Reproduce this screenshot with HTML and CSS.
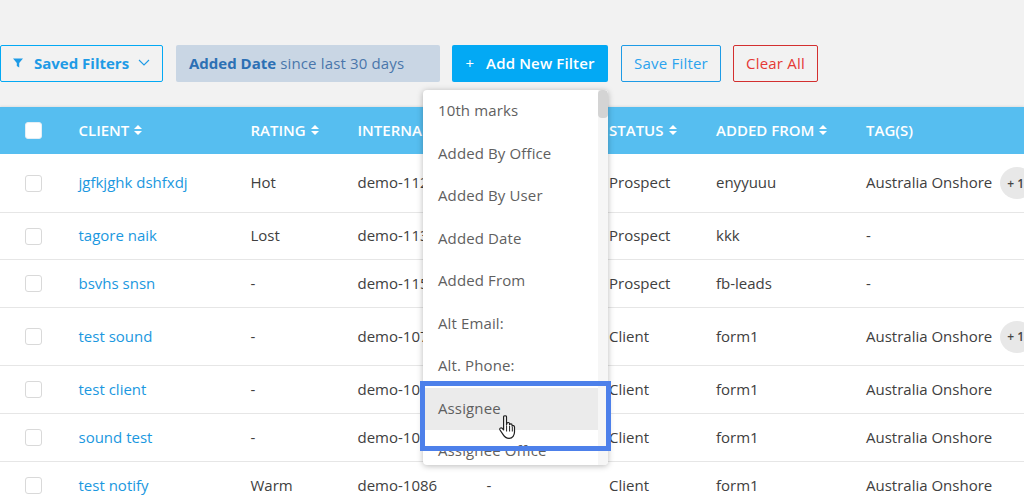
FILE: index.html
```html
<!DOCTYPE html>
<html lang="en">
<head>
<meta charset="utf-8">
<title>Clients</title>
<link rel="stylesheet" href="styles.css">
</head>
<body>
<div class="page">
  <div class="toolbar">
    <button class="btn saved">
      <svg class="ic-filter" viewBox="0 0 10 10" width="10" height="10"><path d="M0 0.5h10L6.2 5v4.5L3.8 8V5z" fill="currentColor"/></svg>
      <span>Saved Filters</span>
      <svg class="ic-chev" viewBox="0 0 12 7" width="12" height="7"><path d="M1 1l5 5 5-5" fill="none" stroke="currentColor" stroke-width="1.1"/></svg>
    </button>
    <div class="chip"><b>Added Date</b> since last 30 days</div>
    <button class="btn add"><span class="plus">+</span><span>Add New Filter</span></button>
    <button class="btn save">Save Filter</button>
    <button class="btn clear">Clear All</button>
  </div>

  <div class="table">
    <div class="row head">
      <div class="cell"><span class="check head-check"></span></div>
      <div class="cell">CLIENT<span class="sort"></span></div>
      <div class="cell">RATING<span class="sort"></span></div>
      <div class="cell">INTERNAL</div>
      <div class="cell"></div>
      <div class="cell">STATUS<span class="sort"></span></div>
      <div class="cell">ADDED FROM<span class="sort"></span></div>
      <div class="cell">TAG(S)</div>
    </div>
    <div class="row tall">
      <div class="cell"><span class="check"></span></div>
      <div class="cell link">jgfkjghk dshfxdj</div><div class="cell">Hot</div><div class="cell">demo-1125</div><div class="cell"></div><div class="cell">Prospect</div><div class="cell">enyyuuu</div>
      <div class="cell">Australia Onshore<span class="more">+ 1</span></div>
    </div>
    <div class="row">
      <div class="cell"><span class="check"></span></div>
      <div class="cell link">tagore naik</div><div class="cell">Lost</div><div class="cell">demo-1130</div><div class="cell"></div><div class="cell">Prospect</div><div class="cell">kkk</div><div class="cell">-</div>
    </div>
    <div class="row">
      <div class="cell"><span class="check"></span></div>
      <div class="cell link">bsvhs snsn</div><div class="cell">-</div><div class="cell">demo-1150</div><div class="cell"></div><div class="cell">Prospect</div><div class="cell">fb-leads</div><div class="cell">-</div>
    </div>
    <div class="row tall">
      <div class="cell"><span class="check"></span></div>
      <div class="cell link">test sound</div><div class="cell">-</div><div class="cell">demo-1075</div><div class="cell"></div><div class="cell">Client</div><div class="cell">form1</div>
      <div class="cell">Australia Onshore<span class="more">+ 1</span></div>
    </div>
    <div class="row">
      <div class="cell"><span class="check"></span></div>
      <div class="cell link">test client</div><div class="cell">-</div><div class="cell">demo-1088</div><div class="cell"></div><div class="cell">Client</div><div class="cell">form1</div><div class="cell">Australia Onshore</div>
    </div>
    <div class="row">
      <div class="cell"><span class="check"></span></div>
      <div class="cell link">sound test</div><div class="cell">-</div><div class="cell">demo-1087</div><div class="cell"></div><div class="cell">Client</div><div class="cell">form1</div><div class="cell">Australia Onshore</div>
    </div>
    <div class="row">
      <div class="cell"><span class="check"></span></div>
      <div class="cell link">test notify</div><div class="cell">Warm</div><div class="cell">demo-1086</div><div class="cell">-</div><div class="cell">Client</div><div class="cell">form1</div><div class="cell">Australia Onshore</div>
    </div>
  </div>

  <div class="menu">
    <div class="menu-list">
      <div class="item">10th marks</div>
      <div class="item">Added By Office</div>
      <div class="item">Added By User</div>
      <div class="item">Added Date</div>
      <div class="item">Added From</div>
      <div class="item">Alt Email:</div>
      <div class="item">Alt. Phone:</div>
      <div class="item hover">Assignee</div>
      <div class="item">Assignee Office</div>
    </div>
    <div class="scrollbar"><div class="thumb"></div></div>
  </div>
  <div class="focus-box"></div>
  <svg class="cursor" viewBox="0 0 18 24" width="18" height="24">
    <path d="M4.6 2c0-1.7 2.9-1.7 2.9 0v8.2l.4-1.8c.4-1.4 2.6-1.1 2.6.4v1c.4-1.3 2.6-1.1 2.6.4v1c.5-1.1 2.4-.8 2.4.7v5.2c0 3-1.8 6.2-5.4 6.2-3 0-4.5-1.1-5.8-3.4L1 15c-.9-1.5.9-2.9 2.2-1.7l1.4 1.6z" fill="#fff" stroke="#1f1f1f" stroke-width="1.2" stroke-linejoin="round"/>
    <path d="M7.6 11v5.5M10.6 11v5.5M13.3 12v4.5" stroke="#1f1f1f" stroke-width="1" fill="none"/>
  </svg>
</div>
</body>
</html>
```
FILE: styles.css
```css
* { box-sizing: border-box; }
html, body { margin: 0; padding: 0; }
body {
  width: 1024px;
  height: 502px;
  overflow: hidden;
  background: #f2f2f2;
  font-family: "Open Sans", sans-serif;
  font-size: 15px;
  color: #404040;
}
.page { position: relative; width: 1024px; height: 502px; overflow: hidden; padding-top: 45px; }

.toolbar {
  display: flex;
  align-items: stretch;
  height: 37px;
}
.btn {
  font: inherit;
  height: 37px;
  border-radius: 2px;
  background: transparent;
  padding: 0 0 2px;
  display: flex;
  align-items: center;
  justify-content: center;
  white-space: nowrap;
}
.saved {
  width: 163px;
  border: 1px solid #03a9f4;
  color: #1e9be6;
  font-weight: 700;
  padding-left: 12px;
  justify-content: flex-start;
}
.ic-filter { margin-right: 11px; }
.ic-chev { margin-left: 9px; }
.chip {
  width: 264px;
  margin-left: 13px;
  background: #c9d6e4;
  border-radius: 2px;
  color: #4a76ab;
  display: flex;
  align-items: center;
  padding: 0 0 2px 13px;
  white-space: pre;
  letter-spacing: .15px;
}
.chip b { color: #2c70b4; font-weight: 700; letter-spacing: 0; }
.add {
  width: 156px;
  margin-left: 12px;
  border: 0;
  background: #03a9f4;
  color: #fff;
  font-weight: 600;
  letter-spacing: .15px;
}
.plus { margin-right: 12px; font-weight: 400; }
.save {
  width: 100px;
  margin-left: 13px;
  border: 1px solid #1e9be6;
  color: #2ba3ee;
  letter-spacing: .2px;
}
.clear {
  width: 85px;
  margin-left: 12px;
  border: 1px solid #d32f2f;
  color: #e53935;
  letter-spacing: .2px;
}

.table { margin-top: 25px; background: #fff; box-shadow: 0 -1px 2px rgba(0,0,0,.08); }
.row {
  display: grid;
  grid-template-columns: 78.5px 172px 107px 129px 122.5px 107px 150px 158px;
  height: 48px;
  border-bottom: 1px solid #e6e6e6;
  align-items: center;
}
.row.tall { height: 59px; }
.row.tall + .row { height: 47px; }
.row.tall:nth-child(5) { height: 58px; }
.row.tall:nth-child(5) + .row { height: 48px; }
.row.head {
  height: 47px;
  background: #56bef0;
  border-bottom: 0;
  color: #fff;
  font-weight: 600;
}
.cell { white-space: nowrap; display: flex; align-items: center; padding-bottom: 2px; }
.cell:first-child { justify-content: flex-start; padding: 0 0 0 25px; }
.link { color: #1b98e0; }
.check {
  display: block;
  width: 17px;
  height: 17px;
  background: #fff;
  border: 1px solid #d9d9d9;
  border-radius: 3px;
}
.head-check { border-color: #e4eef5; }
.sort {
  display: inline-block;
  width: 8px;
  height: 10px;
  margin-left: 5px;
  position: relative;
}
.sort::before, .sort::after {
  content: "";
  position: absolute;
  left: 0;
  border-left: 4px solid transparent;
  border-right: 4px solid transparent;
}
.sort::before { top: 0; border-bottom: 4px solid #fff; }
.sort::after { bottom: 0; border-top: 4px solid #fff; }
.more {
  display: inline-flex;
  align-items: center;
  width: 34px;
  height: 32px;
  margin: 2px 0 0 8px;
  padding: 0 0 0 7px;
  border-radius: 50%;
  background: #e8e8e8;
  font-size: 12px;
  font-weight: 600;
  color: #444;
  flex: none;
}

.menu {
  position: absolute;
  left: 423px;
  top: 90px;
  width: 185px;
  height: 375px;
  background: #fff;
  border-radius: 4px;
  box-shadow: 0 1px 6px rgba(0,0,0,.28);
  overflow: hidden;
  display: flex;
  color: #5f5f5f;
}
.menu-list { width: 175px; flex: none; }
.item {
  height: 42.5px;
  padding: 0 0 2px 15px;
  display: flex;
  align-items: center;
  white-space: nowrap;
  letter-spacing: .12px;
}
.item.hover { background: #ebebeb; }
.scrollbar { flex: 1; background: #f6f6f6; }
.thumb { height: 28px; background: #d4d4d4; border-radius: 4px; }
.focus-box {
  position: absolute;
  left: 420px;
  top: 381px;
  width: 191px;
  height: 70px;
  border: 5px solid #4d80ea;
}
.cursor { position: absolute; left: 499px; top: 415px; }
```
